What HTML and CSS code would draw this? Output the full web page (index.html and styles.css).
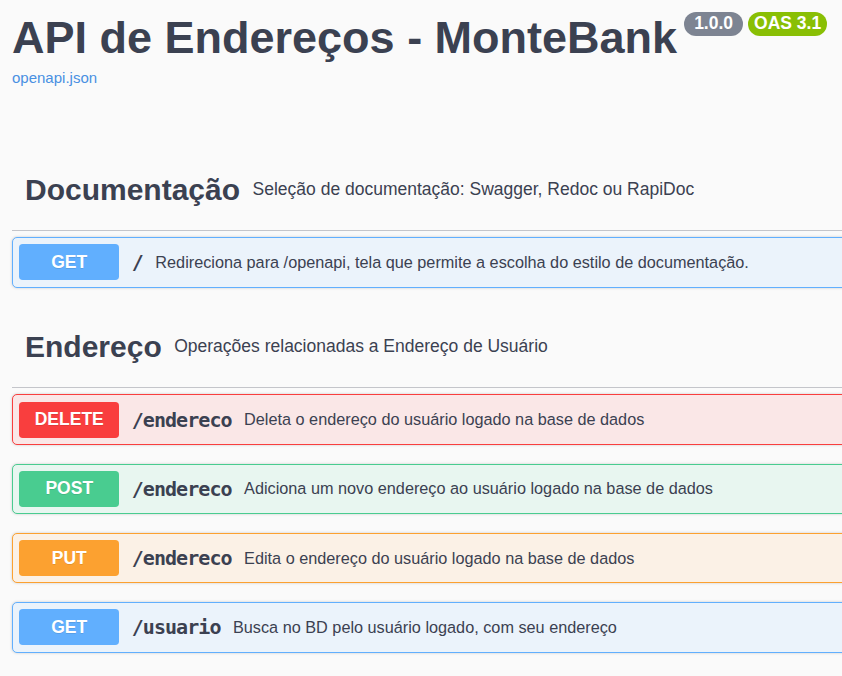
FILE: index.html
```html
<!DOCTYPE html>
<html lang="pt-BR">
<head>
<meta charset="utf-8">
<title>API de Endereços - MonteBank</title>
<link rel="stylesheet" href="styles.css">
</head>
<body>
<div class="page">
  <div class="wrapper">
    <header class="info">
      <div class="title-row">
        <h1 class="title">API de Endereços - MonteBank</h1>
        <span class="badge badge-version">1.0.0</span>
        <span class="badge badge-oas">OAS 3.1</span>
      </div>
      <a class="spec-link" href="#">openapi.json</a>
    </header>

    <section class="tag-section">
      <h3 class="tag">
        <span class="tag-name">Documentação</span>
        <small class="tag-desc">Seleção de documentação: Swagger, Redoc ou RapiDoc</small>
      </h3>
      <div class="op op-get">
        <span class="method">GET</span>
        <span class="path">/</span>
        <span class="desc">Redireciona para /openapi, tela que permite a escolha do estilo de documentação.</span>
      </div>
    </section>

    <section class="tag-section">
      <h3 class="tag">
        <span class="tag-name">Endereço</span>
        <small class="tag-desc">Operações relacionadas a Endereço de Usuário</small>
      </h3>
      <div class="op op-delete">
        <span class="method">DELETE</span>
        <span class="path">/endereco</span>
        <span class="desc">Deleta o endereço do usuário logado na base de dados</span>
      </div>
      <div class="op op-post">
        <span class="method">POST</span>
        <span class="path">/endereco</span>
        <span class="desc">Adiciona um novo endereço ao usuário logado na base de dados</span>
      </div>
      <div class="op op-put">
        <span class="method">PUT</span>
        <span class="path">/endereco</span>
        <span class="desc">Edita o endereço do usuário logado na base de dados</span>
      </div>
      <div class="op op-get">
        <span class="method">GET</span>
        <span class="path">/usuario</span>
        <span class="desc">Busca no BD pelo usuário logado, com seu endereço</span>
      </div>
    </section>
  </div>
</div>
</body>
</html>
```

FILE: styles.css
```css
html, body {
  margin: 0;
  padding: 0;
  background: #fafafa;
}

body {
  font-family: "Liberation Sans", Arial, sans-serif;
  color: #3b4151;
}

.page {
  overflow: hidden;
  width: 842px;
}

.wrapper {
  padding: 0 0 0 12px;
  margin-right: -60px;
}

.info {
  padding-top: 12px;
  margin-bottom: 63px;
}

.title-row {
  display: flex;
  align-items: flex-start;
}

.title {
  margin: 0;
  font-size: 45px;
  font-weight: 700;
  line-height: normal;
  color: #3b4151;
}

.badge {
  display: inline-flex;
  align-items: center;
  height: 24px;
  margin-top: 0;
  border-radius: 57px;
  color: #fff;
  font-size: 17.5px;
  font-weight: 700;
  line-height: 1;
}

.badge-version {
  background: #7d8492;
  padding: 0 10px;
  margin-left: 7px;
}

.badge-oas {
  background: #89bf04;
  padding: 0 6px;
  margin-left: 5px;
}

.spec-link {
  display: block;
  margin-top: 5px;
  font-size: 15px;
  color: #4990e2;
  text-decoration: none;
  line-height: normal;
}

.tag-section {
  display: flex;
  flex-direction: column;
}

.tag {
  display: flex;
  align-items: center;
  min-height: 56px;
  margin: 0 0 6px;
  padding: 12.5px 25px 12.5px 13px;
  border-bottom: 1px solid #c4c5ca;
  font-weight: 400;
}

.tag-name {
  font-size: 30px;
  font-weight: 700;
  color: #3b4151;
}

.tag-desc {
  padding: 0 12.5px;
  font-size: 17.5px;
  color: #3b4151;
}

.op {
  display: flex;
  align-items: center;
  padding: 6.25px;
  margin-bottom: 18.75px;
  border: 1px solid;
  border-radius: 5px;
  box-shadow: 0 0 3px rgba(0, 0, 0, 0.19);
}

.method {
  flex: none;
  width: 100px;
  padding: 7.5px 0;
  border-radius: 3.75px;
  color: #fff;
  font-size: 17.5px;
  font-weight: 700;
  line-height: 21px;
  text-align: center;
  text-shadow: 0 1px 0 rgba(0, 0, 0, 0.1);
}

.path {
  padding: 0 12.5px;
  font-family: "DejaVu Sans Mono", "Liberation Mono", monospace;
  font-size: 20px;
  font-weight: 700;
  letter-spacing: -0.95px;
  color: #3b4151;
}

.desc {
  font-size: 16.25px;
  color: #3b4151;
  white-space: nowrap;
}

.op-get { border-color: #61affe; background: #ebf3fb; }
.op-get .method { background: #61affe; }

.op-delete { border-color: #f93e3e; background: #fae7e7; }
.op-delete .method { background: #f93e3e; }

.op-post { border-color: #49cc90; background: #e8f6f0; }
.op-post .method { background: #49cc90; }

.op-put { border-color: #fca130; background: #fbf1e6; }
.op-put .method { background: #fca130; }
```
